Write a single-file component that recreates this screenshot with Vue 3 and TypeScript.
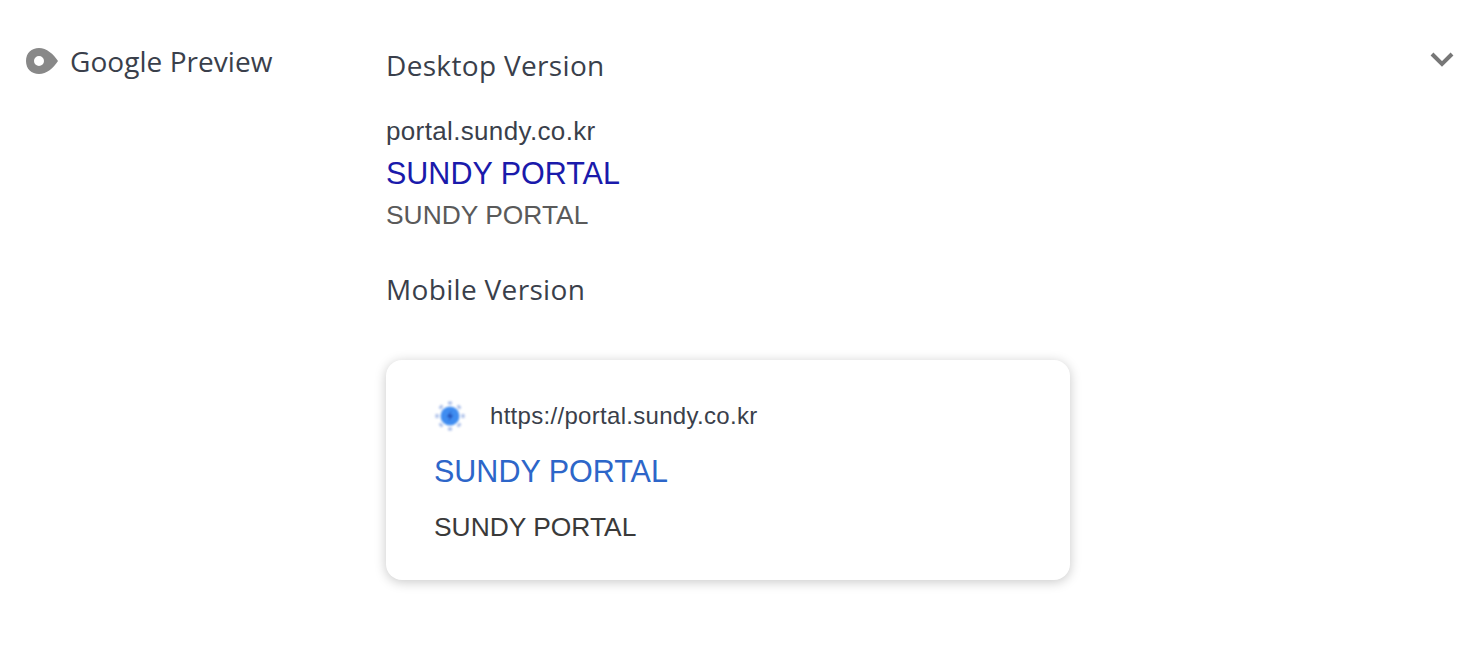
<script setup lang="ts">
const rayLines = [
  { x1: 16, y1: 1.5, x2: 16, y2: 4.5 },
  { x1: 16, y1: 27.5, x2: 16, y2: 30.5 },
  { x1: 1.5, y1: 16, x2: 4.5, y2: 16 },
  { x1: 27.5, y1: 16, x2: 30.5, y2: 16 },
  { x1: 6, y1: 6, x2: 8, y2: 8 },
  { x1: 24, y1: 24, x2: 26, y2: 26 },
  { x1: 26, y1: 6, x2: 24, y2: 8 },
  { x1: 8, y1: 24, x2: 6, y2: 26 },
]
</script>

<template>
  <div class="page">
    <div class="label">
      <svg class="eye" width="32" height="26" viewBox="0 0 32 26">
        <path fill-rule="evenodd" fill="#888888" d="M0 13C0 5 5.500 0 13 0C20.500 0 27.500 6 32 13C27.500 20 20.500 26 13 26C5.500 26 0 21 0 13ZM13 8A5 5 0 1 0 13 18A5 5 0 1 0 13 8Z" />
      </svg>
      <span class="label-text">Google Preview</span>
    </div>
    <div class="content">
      <h3 class="heading">Desktop Version</h3>
      <div class="url">portal.sundy.co.kr</div>
      <div class="title">SUNDY PORTAL</div>
      <div class="desc">SUNDY PORTAL</div>
      <h3 class="heading mobile">Mobile Version</h3>
      <div class="card">
        <div class="card-url">
          <svg class="favicon" width="32" height="32" viewBox="0 0 32 32">
            <line v-for="(r, i) in rayLines" :key="i" :x1="r.x1" :y1="r.y1" :x2="r.x2" :y2="r.y2" stroke="#a9bde8" stroke-width="4" />
            <circle cx="16" cy="16" r="9.500" fill="#3f8cf0" />
            <path d="M17.500 10.500L13 17H16L14.500 21.500L19 15H16Z" fill="#1f4ab0" />
          </svg>
          <span>https://portal.sundy.co.kr</span>
        </div>
        <div class="card-title">SUNDY PORTAL</div>
        <div class="card-desc">SUNDY PORTAL</div>
      </div>
    </div>
    <svg class="chevron" width="24" height="16" viewBox="0 0 24 16">
      <path d="M2 3L12 13L22 3" fill="none" stroke="#777777" stroke-width="4" />
    </svg>
  </div>
</template>

<style>
html, body { margin: 0; background: #ffffff; }
</style>

<style scoped>
.page {
  display: flex;
  align-items: flex-start;
  height: 652px;
  box-sizing: border-box;
  padding: 46px 28px 0 26px;
  font-family: "Liberation Sans", Arial, sans-serif;
  overflow: hidden;
}
.label {
  display: flex;
  align-items: center;
  gap: 12px;
  width: 360px;
  flex: none;
}
.eye { flex: none; }
.label-text, .heading {
  font-family: "Open Sans", sans-serif;
  font-size: 28px;
  font-weight: 400;
  color: #3a3f4b;
}
.label-text { line-height: 30px; letter-spacing: 0.05px; }
.content { flex: 1; }
.heading { margin: 0; line-height: 38px; letter-spacing: 0.33px; }
.url { margin-top: 30px; font-size: 26px; line-height: 34px; color: #3a3f4b; letter-spacing: 0.35px; }
.title { margin-top: 7px; font-size: 30.500px; line-height: 36px; color: #1a1aab; }
.desc { margin-top: 7px; font-size: 26.400px; line-height: 34px; color: #5a5a5a; }
.mobile { margin-top: 38px; }
.card {
  margin-top: 52px;
  width: 684px;
  height: 220px;
  box-sizing: border-box;
  padding: 40px 48px 0;
  background: #fff;
  border-radius: 16px;
  box-shadow: 0 2px 12px rgba(0, 0, 0, 0.22);
}
.card-url { display: flex; align-items: center; gap: 24px; font-size: 24px; color: #3a3f4b; height: 32px; letter-spacing: 0.3px; }
.favicon { flex: none; filter: blur(0.9px); }
.card-title { margin-top: 21px; font-size: 30.500px; line-height: 36px; color: #2d66c9; }
.card-desc { margin-top: 21px; font-size: 26.400px; line-height: 34px; color: #3a3a3a; }
.chevron { position: absolute; left: 1430px; top: 51px; }
</style>
